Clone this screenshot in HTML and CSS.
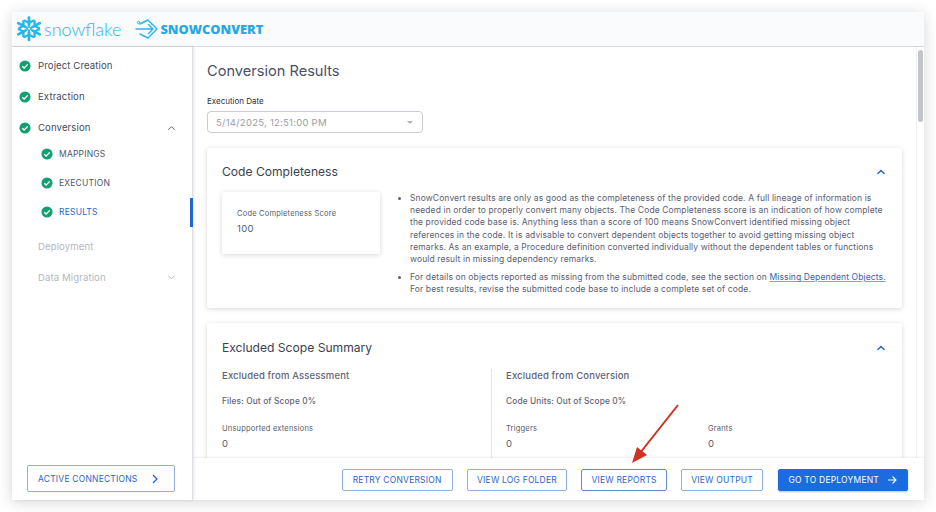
FILE: index.html
```html
<!DOCTYPE html>
<html lang="en">
<head>
    <meta charset="UTF-8">
    <meta name="viewport" content="width=device-width, initial-scale=1.0">
    <title>SnowConvert</title>
    <link rel="stylesheet" href="styles.css">
</head>
<body>
    <div class="app">
        <header class="topbar">
            <svg class="flake" width="28" height="25.5" viewBox="0 0 26 26" preserveAspectRatio="none" fill="none" stroke="#29b5e8" stroke-linecap="round" stroke-linejoin="round">
                <defs>
                    <g id="arm">
                        <path d="M13 9.5V1.500" stroke-width="2.6"/>
                        <path d="M13 7L8.800 4.600M13 7l4.200-2.400" stroke-width="2.200"/>
                    </g>
                </defs>
                <use href="#arm"/>
                <use href="#arm" transform="rotate(60 13 13)"/>
                <use href="#arm" transform="rotate(120 13 13)"/>
                <use href="#arm" transform="rotate(180 13 13)"/>
                <use href="#arm" transform="rotate(240 13 13)"/>
                <use href="#arm" transform="rotate(300 13 13)"/>
                <path d="M13 10.800l2.200 2.200-2.200 2.200-2.200-2.200z" stroke-width="1.200"/>
            </svg>
            <span class="brand-snow">snowflake</span>
            <svg class="convert-icon" width="24" height="20" viewBox="0 0 24 20" fill="none" stroke="#29b5e8" stroke-width="1.4" stroke-linejoin="round" stroke-linecap="round">
                <circle cx="3.500" cy="3.500" r="1.200" stroke-width="1"/>
                <path d="M5 5l8-4 9 9-9 9-8-4"/>
                <path d="M1 10h17M13.500 5.500L18 10l-4.500 4.500"/>
            </svg>
            <span class="brand-convert">SNOWCONVERT</span>
        </header>

        <div class="body-row">
            <nav class="sidebar">
                <ul class="steps">
                    <li class="step">
                        <svg class="check" viewBox="0 0 14 14"><circle cx="7" cy="7" r="6.5"/><path d="M3.800 7.200l2.200 2.200 4.200-4.300"/></svg>
                        <span>Project Creation</span>
                    </li>
                    <li class="step">
                        <svg class="check" viewBox="0 0 14 14"><circle cx="7" cy="7" r="6.5"/><path d="M3.800 7.200l2.200 2.200 4.200-4.300"/></svg>
                        <span>Extraction</span>
                    </li>
                    <li class="step open">
                        <svg class="check" viewBox="0 0 14 14"><circle cx="7" cy="7" r="6.5"/><path d="M3.800 7.200l2.200 2.200 4.200-4.300"/></svg>
                        <span>Conversion</span>
                        <svg class="caret" viewBox="0 0 10 6"><path d="M1.500 5L5 1.500 8.500 5"/></svg>
                    </li>
                    <li class="substep">
                        <svg class="check" viewBox="0 0 14 14"><circle cx="7" cy="7" r="6.5"/><path d="M3.800 7.200l2.200 2.200 4.200-4.300"/></svg>
                        <span>MAPPINGS</span>
                    </li>
                    <li class="substep">
                        <svg class="check" viewBox="0 0 14 14"><circle cx="7" cy="7" r="6.5"/><path d="M3.800 7.200l2.200 2.200 4.200-4.300"/></svg>
                        <span>EXECUTION</span>
                    </li>
                    <li class="substep active">
                        <svg class="check" viewBox="0 0 14 14"><circle cx="7" cy="7" r="6.5"/><path d="M3.800 7.200l2.200 2.200 4.200-4.300"/></svg>
                        <span>RESULTS</span>
                    </li>
                    <li class="step disabled"><span>Deployment</span></li>
                    <li class="step disabled">
                        <span>Data Migration</span>
                        <svg class="caret" viewBox="0 0 10 6"><path d="M1.500 1.500L5 5l3.500-3.500"/></svg>
                    </li>
                </ul>
                <button class="btn connections">
                    <span>ACTIVE CONNECTIONS</span>
                    <svg class="chev" viewBox="0 0 6 10"><path d="M1 1l4 4-4 4"/></svg>
                </button>
            </nav>

            <main class="main">
                <div class="scroll">
                    <h1 class="page-title">Conversion Results</h1>
                    <label class="field-label">Execution Date</label>
                    <div class="select">
                        <span>5/14/2025, 12:51:00 PM</span>
                        <i class="select-arrow"></i>
                    </div>

                    <section class="card first">
                        <div class="card-head">
                            <h2>Code Completeness</h2>
                            <svg class="collapse" viewBox="0 0 10 6"><path d="M1.500 5L5 1.500 8.500 5"/></svg>
                        </div>
                        <div class="completeness">
                            <div class="score">
                                <div class="metric-label">Code Completeness Score</div>
                                <div class="metric-value">100</div>
                            </div>
                            <ul class="notes">
                                <li>SnowConvert results are only as good as the completeness of the provided code. A full lineage of information is needed in order to properly convert many objects. The Code Completeness score is an indication of how complete the provided code base is. Anything less than a score of 100 means SnowConvert identified missing object references in the code. It is advisable to convert dependent objects together to avoid getting missing object remarks. As an example, a Procedure definition converted individually without the dependent tables or functions would result in missing dependency remarks.</li>
                                <li>For details on objects reported as missing from the submitted code, see the section on <a href="#">Missing Dependent Objects.</a> For best results, revise the submitted code base to include a complete set of code.</li>
                            </ul>
                        </div>
                    </section>

                    <section class="card second">
                        <div class="card-head">
                            <h2>Excluded Scope Summary</h2>
                            <svg class="collapse" viewBox="0 0 10 6"><path d="M1.500 5L5 1.500 8.500 5"/></svg>
                        </div>
                        <div class="scope">
                            <div class="scope-col">
                                <h3>Excluded from Assessment</h3>
                                <div class="scope-sub">Files: Out of Scope 0%</div>
                                <div class="metric-label">Unsupported extensions</div>
                                <div class="metric-value">0</div>
                            </div>
                            <div class="scope-col right">
                                <h3>Excluded from Conversion</h3>
                                <div class="scope-sub">Code Units: Out of Scope 0%</div>
                                <div class="metrics">
                                    <div>
                                        <div class="metric-label">Triggers</div>
                                        <div class="metric-value">0</div>
                                    </div>
                                    <div>
                                        <div class="metric-label">Grants</div>
                                        <div class="metric-value">0</div>
                                    </div>
                                </div>
                            </div>
                        </div>
                    </section>
                </div>
                <div class="scrollbar"><div class="thumb"></div></div>

                <footer class="actions">
                    <button class="btn">RETRY CONVERSION</button>
                    <button class="btn">VIEW LOG FOLDER</button>
                    <button class="btn strong">VIEW REPORTS</button>
                    <button class="btn">VIEW OUTPUT</button>
                    <button class="btn primary">
                        <span>GO TO DEPLOYMENT</span>
                        <svg class="arrow" viewBox="0 0 10 10"><path d="M1 5h8M5.500 1.500L9 5 5.500 8.500"/></svg>
                    </button>
                </footer>

                <!-- annotation on top of the screenshot -->
                <svg class="callout" width="54" height="64" viewBox="0 0 54 64">
                    <path d="M49 2L11 50" stroke="#cf3220" stroke-width="2" fill="none"/>
                    <path d="M3 60l5-16 10 8z" fill="#cf3220"/>
                </svg>
            </main>
        </div>
    </div>
</body>
</html>
```

FILE: styles.css
```css
* {
    box-sizing: border-box;
}
html, body {
    height: 100%;
}
body {
    margin: 0;
    padding: 12px;
    background-color: #ffffff;
    font-family: Inter, "Liberation Sans", sans-serif;
    color: #4a5068;
    overflow: hidden;
}
.app {
    display: flex;
    flex-direction: column;
    height: 488px;
    background-color: #ffffff;
    box-shadow: 0 2px 14px rgba(0, 0, 0, 0.16);
}

/* top bar */
.topbar {
    display: flex;
    align-items: center;
    height: 35px;
    flex-shrink: 0;
    padding-left: 3px;
    background-color: #f9fbfd;
    border-bottom: 1px solid #d5d9de;
}
.brand-snow {
    margin-left: 1px;
    font-family: Lato, sans-serif;
    font-size: 18px;
    font-weight: 300;
    color: #29b5e8;
}
.convert-icon {
    margin-left: 14px;
}
.brand-convert {
    margin-left: 1px;
    font-family: "Open Sans", sans-serif;
    font-size: 12.8px;
    font-weight: 800;
    color: #29a9e0;
}

.body-row {
    display: flex;
    flex: 1;
    min-height: 0;
}

/* sidebar */
.sidebar {
    display: flex;
    flex-direction: column;
    justify-content: space-between;
    width: 181px;
    flex-shrink: 0;
    padding: 3px 0 8px;
    border-right: 1px solid #dcdfe3;
    box-shadow: 1px 0 3px rgba(0, 0, 0, 0.1);
    z-index: 1;
}
.steps {
    list-style: none;
    margin: 0;
    padding: 0;
}
.step {
    display: flex;
    align-items: center;
    height: 31px;
    padding-left: 7px;
    font-size: 9.6px;
    letter-spacing: 0.1px;
    color: #464b5d;
}
.step .check + span {
    margin-left: 7px;
}
.step.open {
    margin-bottom: -4px;
}
.substep {
    display: flex;
    align-items: center;
    height: 29.3px;
    padding-left: 29px;
    font-size: 8.5px;
    letter-spacing: 0.2px;
    color: #50556a;
}
.substep span {
    margin-left: 6px;
}
.check {
    width: 12px;
    height: 12px;
    flex-shrink: 0;
}
.check circle {
    fill: #12a071;
}
.check path {
    fill: none;
    stroke: #ffffff;
    stroke-width: 1.6;
}
.caret {
    width: 9px;
    height: 6px;
    margin-left: auto;
    margin-right: 16px;
    fill: none;
    stroke: #5a6070;
    stroke-width: 1.1;
}
.substep.active {
    margin-right: -1px;
    margin-bottom: 4px;
    color: #2a64c8;
    border-right: 3px solid #2365d1;
}
.step.disabled {
    padding-left: 26px;
    color: #b4b7bf;
}
.step.disabled .caret {
    stroke: #b4b7bf;
}

/* buttons */
.btn {
    display: inline-flex;
    align-items: center;
    justify-content: center;
    height: 22px;
    padding: 0 9px;
    background-color: #ffffff;
    border: 1px solid #8fb0dc;
    border-radius: 2px;
    font-family: Inter, "Liberation Sans", sans-serif;
    font-size: 8.5px;
    letter-spacing: 0.2px;
    color: #2a64c8;
}
.btn.strong {
    border-color: #5f8ac6;
}
.btn.primary {
    padding: 0 10px;
    background-color: #1a6ce0;
    border-color: #1a6ce0;
    color: #ffffff;
    box-shadow: 0 1px 2px rgba(0, 0, 0, 0.25);
}
.actions .btn:first-child {
    padding: 0 10px;
}
.connections {
    justify-content: flex-start;
    width: 148px;
    height: 27px;
    margin-left: 15px;
    padding: 0 10px;
}
.chev {
    width: 6px;
    height: 10px;
    margin-left: 15px;
    fill: none;
    stroke: #2a64c8;
    stroke-width: 1.3;
}
.arrow {
    width: 10px;
    height: 10px;
    margin-left: 8px;
    fill: none;
    stroke: #ffffff;
    stroke-width: 1.1;
}

/* main column */
.main {
    position: relative;
    flex: 1;
    display: flex;
    flex-direction: column;
    min-width: 0;
}
.scroll {
    flex: 1;
    min-height: 0;
    overflow: hidden;
    padding: 16px 22px 0 14px;
}
.scrollbar {
    position: absolute;
    top: 0;
    right: 0;
    bottom: 42px;
    width: 8px;
    padding: 3px 1px;
    background-color: #ffffff;
    border-left: 1px solid #eceef0;
}
.thumb {
    width: 5px;
    height: 72px;
    border-radius: 3px;
    background-color: #c4c5c8;
}
.page-title {
    margin: 0;
    font-size: 14.6px;
    line-height: 17px;
    font-weight: 400;
    color: #4a5068;
}
.field-label {
    display: block;
    margin-top: 16px;
    font-size: 8px;
    line-height: 10px;
    color: #2e3240;
}
.select {
    display: flex;
    align-items: center;
    justify-content: space-between;
    width: 216px;
    height: 22px;
    margin-top: 5px;
    padding: 0 9px 0 8px;
    border: 1px solid #c9ccd2;
    border-radius: 4px;
    font-size: 9.5px;
    letter-spacing: 0.25px;
    color: #9a9da6;
}
.select-arrow {
    width: 0;
    height: 0;
    border-left: 3px solid transparent;
    border-right: 3px solid transparent;
    border-top: 3px solid #b0b2b8;
}

/* cards */
.card {
    margin-bottom: 15px;
    padding: 0 15px;
    background-color: #ffffff;
    border-radius: 3px;
    box-shadow: 0 1px 5px rgba(0, 0, 0, 0.16);
}
.card.first {
    height: 160px;
    margin-top: 15px;
}
.card-head {
    display: flex;
    align-items: center;
    justify-content: space-between;
    height: 44px;
    padding: 3px 1px 0 0;
}
.card.second .card-head {
    height: 46px;
}
.card-head h2 {
    margin: 0;
    font-size: 12.1px;
    font-weight: 400;
    color: #3c4050;
}
.collapse {
    width: 10px;
    height: 6px;
    fill: none;
    stroke: #1f5fb8;
    stroke-width: 1.3;
}
.completeness {
    display: flex;
}
.score {
    width: 158px;
    height: 62px;
    flex-shrink: 0;
    padding: 17px 15px 0;
    border-radius: 2px;
    box-shadow: 0 1px 5px rgba(0, 0, 0, 0.16);
}
.metric-label {
    font-size: 7.5px;
    line-height: 10px;
    letter-spacing: 0.2px;
    color: #565b6b;
}
.metric-value {
    margin-top: 4px;
    font-size: 9.5px;
    line-height: 11px;
    letter-spacing: 0.3px;
    color: #565b6b;
}
.notes {
    flex: 1;
    margin: 0;
    padding: 0 0 0 30px;
    font-size: 8.5px;
    line-height: 12.2px;
    letter-spacing: 0.115px;
    color: #5b6072;
}
.notes li {
    margin-bottom: 6px;
}
.notes a {
    color: #2a64c8;
    text-decoration-color: #7fa3e0;
}
.scope {
    display: flex;
    height: 100px;
}
.scope-col {
    width: 269px;
    flex-shrink: 0;
}
.scope-col.right {
    flex: 1;
    padding-left: 14px;
    border-left: 1px solid #e2e4e8;
}
.scope-col h3 {
    margin: 1px 0 0;
    font-size: 9.5px;
    line-height: 11px;
    font-weight: 500;
    letter-spacing: 0.15px;
    color: #5f6475;
}
.scope-sub {
    margin-top: 15px;
    margin-bottom: 18px;
    font-size: 8.3px;
    line-height: 10px;
    font-weight: 500;
    letter-spacing: 0.15px;
    color: #5f6475;
}
.metrics {
    display: grid;
    grid-template-columns: 202px 1fr;
}

/* footer */
.actions {
    position: relative;
    display: flex;
    align-items: center;
    justify-content: flex-end;
    gap: 14.5px;
    height: 42px;
    flex-shrink: 0;
    padding: 2px 16px 0 0;
    background-color: #ffffff;
    box-shadow: 0 -1px 2px rgba(0, 0, 0, 0.08);
}
.callout {
    position: absolute;
    left: 436px;
    top: 356px;
    z-index: 5;
}
```
